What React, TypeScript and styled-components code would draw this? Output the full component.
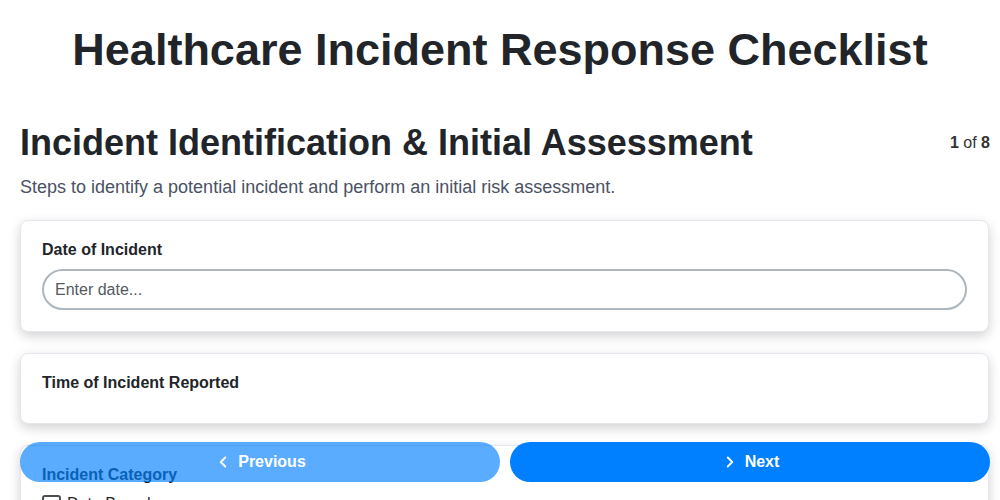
import { createGlobalStyle } from 'styled-components';
import styled from 'styled-components';
import { ChevronLeft, ChevronRight } from 'lucide-react';

const GlobalStyle = createGlobalStyle`
	body {
		margin: 0;
		background: #fff;
		font-family: 'Liberation Sans', Arial, sans-serif;
		color: #212529;
	}
	* { box-sizing: border-box; }
`;

const categories = ['Data Breach', 'Medication Error', 'Patient Fall', 'Equipment Failure'];

const App = () => {
	return (
		<>
			<GlobalStyle />
			<Title>Healthcare Incident Response Checklist</Title>
			<Page>
				<SectionHeader>
					<SectionTitle>Incident Identification &amp; Initial Assessment</SectionTitle>
					<StepCount>
						<b>1</b> of <b>8</b>
					</StepCount>
				</SectionHeader>
				<SectionText>Steps to identify a potential incident and perform an initial risk assessment.</SectionText>
				<Fields>
					<Card>
						<Label>Date of Incident</Label>
						<Input placeholder="Enter date..." />
					</Card>
					<Card>
						<Label>Time of Incident Reported</Label>
					</Card>
					<Card>
						<Label>Incident Category</Label>
						<CheckList>
							{categories.map((c) => (
								<CheckRow key={c}>
									<Check type="checkbox" />
									{c}
								</CheckRow>
							))}
						</CheckList>
					</Card>
				</Fields>
			</Page>
			<Footer>
				<NavButton disabled>
					<ChevronLeft size={18} strokeWidth={2.5} />
					Previous
				</NavButton>
				<NavButton>
					<ChevronRight size={18} strokeWidth={2.5} />
					Next
				</NavButton>
			</Footer>
		</>
	);
};

const Title = styled.h1`
	margin: 0;
	padding: 24px 0 45px;
	text-align: center;
	font-size: 45px;
	line-height: 52px;
	font-weight: 700;
	color: #212529;
`;

const Page = styled.div`
	padding: 0 10px 80px 20px;
`;

const SectionHeader = styled.div`
	display: flex;
	justify-content: space-between;
	align-items: center;
`;

const SectionTitle = styled.h2`
	margin: 0;
	font-size: 36px;
	line-height: 44px;
	font-weight: 700;
	color: #212529;
`;

const StepCount = styled.div`
	font-size: 16px;
	color: #333;
`;

const SectionText = styled.p`
	margin: 10px 0 21px;
	font-size: 18px;
	line-height: 24px;
	color: #4a5263;
`;

const Fields = styled.div`
	display: flex;
	flex-direction: column;
	gap: 21px;
	padding-right: 1px;
`;

const Card = styled.div`
	background: #fff;
	border: 1px solid #e6e6ee;
	border-radius: 8px;
	padding: 20px 21px 21px;
	box-shadow: 0 4px 12px rgba(0, 0, 0, 0.18);
`;

const Label = styled.div`
	font-size: 16px;
	line-height: 18px;
	font-weight: 700;
	color: #212529;
	margin-bottom: 10px;
`;

const Input = styled.input`
	display: block;
	width: 100%;
	height: 41px;
	border: 2px solid #adb5bd;
	border-radius: 21px;
	padding: 0 11px;
	font-family: inherit;
	font-size: 16px;
	color: #212529;
	outline: none;

	&::placeholder {
		color: #555a62;
	}
`;

const CheckList = styled.div`
	display: flex;
	flex-direction: column;
	gap: 8px;
`;

const CheckRow = styled.label`
	display: flex;
	align-items: center;
	gap: 6px;
	font-size: 16px;
	line-height: 20px;
	color: #212529;
`;

const Check = styled.input`
	appearance: none;
	width: 19px;
	height: 19px;
	margin: 0;
	border: 2px solid #4a4f57;
	border-radius: 3px;
	background: #fff;
`;

const Footer = styled.div`
	position: fixed;
	left: 20px;
	right: 10px;
	bottom: 18px;
	display: grid;
	grid-template-columns: 1fr 1fr;
	gap: 10px;
`;

const NavButton = styled.button`
	display: flex;
	align-items: center;
	justify-content: center;
	gap: 6px;
	height: 40px;
	border: none;
	border-radius: 20px;
	background: #0080ff;
	color: #fff;
	font-family: inherit;
	font-size: 16px;
	font-weight: 700;
	cursor: pointer;

	&:disabled {
		opacity: 0.65;
		cursor: default;
	}
`;

export default App;
